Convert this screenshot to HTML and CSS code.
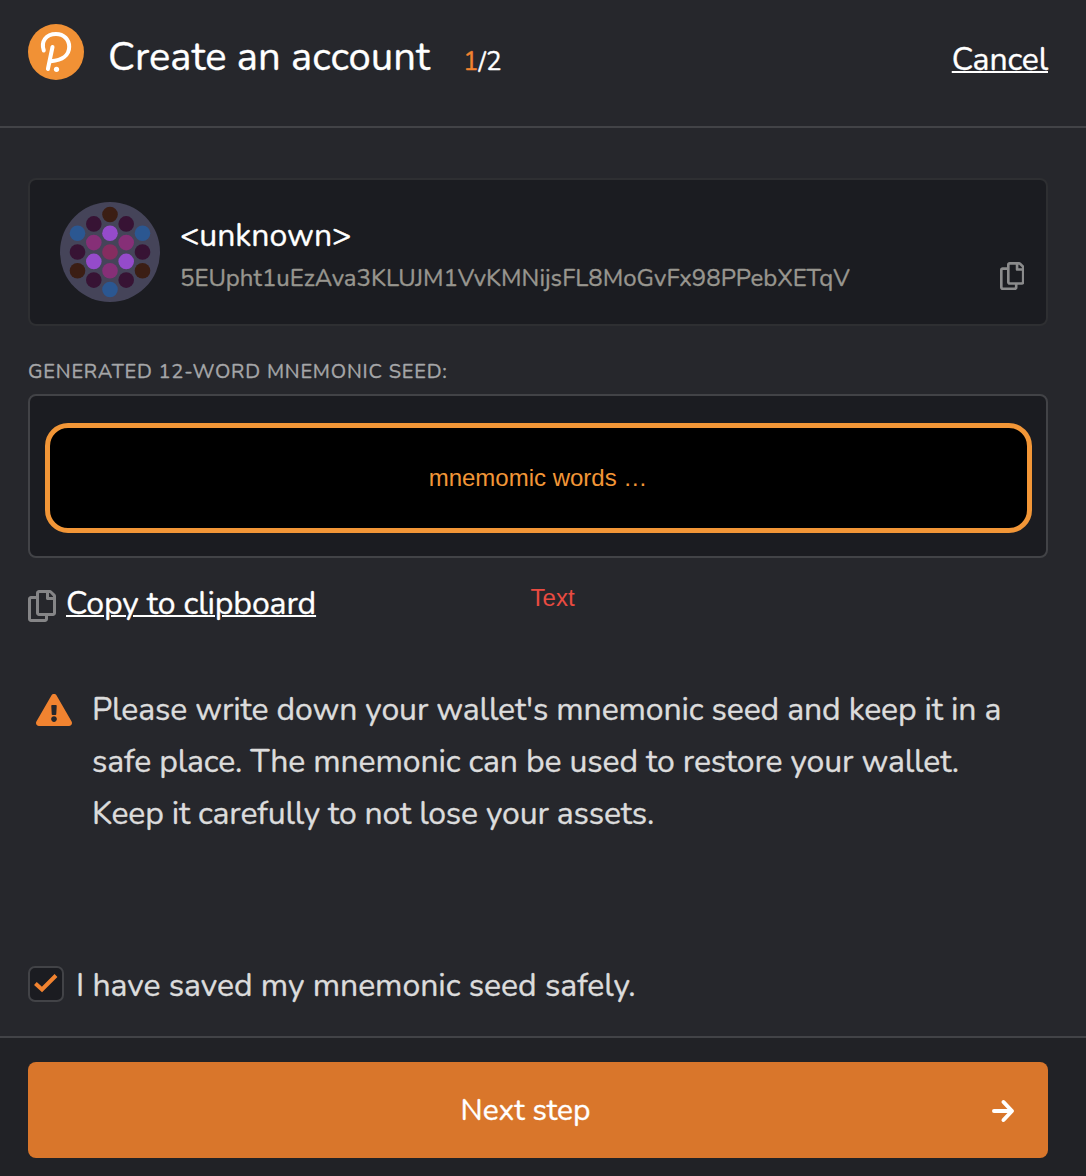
FILE: index.html
```html
<!DOCTYPE html>
<html lang="en">
<head>
<meta charset="utf-8">
<title>Create an account</title>
<link rel="stylesheet" href="styles.css">
</head>
<body>
<header class="header">
  <svg class="logo" viewBox="0 0 56 56"><circle cx="28" cy="28" r="28" fill="#f19135"/><g fill="none" stroke="#fff" stroke-width="4" stroke-linecap="round" stroke-linejoin="round"><path d="M15.8 26.5C12.6 17.5 18 10 28 10C36 10 41.2 15.8 41.2 22.8C41.2 31 34.5 36.3 23 37.3M24.5 23L19.9 45"/></g><circle cx="28.5" cy="45.3" r="2.6" fill="#fff"/></svg>
  <h1 class="title">Create an account</h1>
  <div class="step"><span class="step-current">1</span>/2</div>
  <a class="cancel">Cancel</a>
</header>
<main class="content">
  <section class="account">
    <svg class="avatar" viewBox="-50 -50 100 100">
      <circle r="50" fill="#454459"/>
      <g fill="#3b1e14"><circle cy="-37.5" r="7.8"/><circle cx="-32.5" cy="18.7" r="7.8"/><circle cx="32.5" cy="18.7" r="7.8"/></g>
      <g fill="#371334"><circle cx="-16.2" cy="-28.1" r="7.8"/><circle cx="16.2" cy="-28.1" r="7.8"/><circle cx="-32.5" r="7.8"/><circle cx="32.5" r="7.8"/><circle cx="-16.2" cy="28.1" r="7.8"/><circle cx="16.2" cy="28.1" r="7.8"/></g>
      <g fill="#2b5791"><circle cx="-32.5" cy="-18.7" r="7.8"/><circle cx="32.5" cy="-18.7" r="7.8"/><circle cy="37.5" r="7.8"/></g>
      <g fill="#954bcb"><circle cy="-18.7" r="7.8"/><circle cx="-16.2" cy="9.4" r="7.8"/><circle cx="16.2" cy="9.4" r="7.8"/></g>
      <g fill="#862f77"><circle cx="-16.2" cy="-9.4" r="7.8"/><circle cx="16.2" cy="-9.4" r="7.8"/><circle cy="18.7" r="7.8"/></g>
      <circle r="7.8" fill="#852d60"/>
    </svg>
    <div class="identity">
      <div class="name">&lt;unknown&gt;</div>
      <div class="address">5EUpht1uEzAva3KLUJM1VvKMNijsFL8MoGvFx98PPebXETqV</div>
    </div>
    <svg class="copy-address" viewBox="0 0 448 512"><path d="M433.941 65.941l-51.882-51.882A48 48 0 0 0 348.118 0H176c-26.51 0-48 21.49-48 48v48H48c-26.51 0-48 21.49-48 48v320c0 26.51 21.49 48 48 48h224c26.51 0 48-21.49 48-48v-48h80c26.51 0 48-21.49 48-48V99.882a48 48 0 0 0-14.059-33.941zM266 464H54a6 6 0 0 1-6-6V150a6 6 0 0 1 6-6h74v224c0 26.51 21.49 48 48 48h96v42a6 6 0 0 1-6 6zm128-96H182a6 6 0 0 1-6-6V54a6 6 0 0 1 6-6h106v88c0 13.255 10.745 24 24 24h88v202a6 6 0 0 1-6 6zm6-256h-64V48h9.632c1.591 0 3.117.632 4.243 1.757l48.368 48.368a6 6 0 0 1 1.757 4.243V112z"/></svg>
  </section>
  <div class="label">Generated 12-word mnemonic seed:</div>
  <section class="seed"><div class="seed-words">mnemomic words …</div></section>
  <div class="copy-row">
    <svg class="copy-icon" viewBox="0 0 448 512"><path d="M433.941 65.941l-51.882-51.882A48 48 0 0 0 348.118 0H176c-26.51 0-48 21.49-48 48v48H48c-26.51 0-48 21.49-48 48v320c0 26.51 21.49 48 48 48h224c26.51 0 48-21.49 48-48v-48h80c26.51 0 48-21.49 48-48V99.882a48 48 0 0 0-14.059-33.941zM266 464H54a6 6 0 0 1-6-6V150a6 6 0 0 1 6-6h74v224c0 26.51 21.49 48 48 48h96v42a6 6 0 0 1-6 6zm128-96H182a6 6 0 0 1-6-6V54a6 6 0 0 1 6-6h106v88c0 13.255 10.745 24 24 24h88v202a6 6 0 0 1-6 6zm6-256h-64V48h9.632c1.591 0 3.117.632 4.243 1.757l48.368 48.368a6 6 0 0 1 1.757 4.243V112z"/></svg>
    <a class="copy-link">Copy to clipboard</a>
    <span class="note">Text</span>
  </div>
  <section class="warning">
    <svg class="warning-icon" viewBox="0 0 576 512"><path d="M569.517 440.013C587.975 472.007 564.806 512 527.94 512H48.054c-36.937 0-59.999-40.055-41.577-71.987L246.423 23.985c18.467-32.009 64.72-31.951 83.154 0l239.94 416.028zM288 354c-25.405 0-46 20.595-46 46s20.595 46 46 46 46-20.595 46-46-20.595-46-46-46zm-43.673-165.346l7.418 136c.347 6.364 5.609 11.346 11.982 11.346h48.546c6.373 0 11.635-4.982 11.982-11.346l7.418-136c.375-6.874-5.098-12.654-11.982-12.654h-63.383c-6.884 0-12.356 5.78-11.981 12.654z"/></svg>
    <p class="warning-text">Please write down your wallet's mnemonic seed and keep it in a<br>safe place. The mnemonic can be used to restore your wallet.<br><span class="last-line">Keep it carefully to not lose your assets.</span></p>
  </section>
  <label class="confirm">
    <span class="checkbox"><svg class="check" viewBox="0 0 24 20"><path d="M1.4 10.5L8 16.5L22 2.5" fill="none" stroke="#f18330" stroke-width="4"/></svg></span>
    <span class="confirm-text">I have saved my mnemonic seed safely.</span>
  </label>
</main>
<footer class="footer">
  <button class="next"><span></span><span class="next-text">Next step</span><svg class="arrow" viewBox="0 0 24 24"><path d="M3 12H20M12.5 3L21 12L12.5 21" fill="none" stroke="#fff" stroke-width="4" stroke-linecap="round" stroke-linejoin="round"/></svg></button>
</footer>
</body>
</html>
```
FILE: styles.css
```css
* { box-sizing: border-box; }
body {
  margin: 0;
  height: 1176px;
  display: flex;
  flex-direction: column;
  overflow: hidden;
  background: #26272c;
  color: #fff;
  font-family: Nunito, Lato, "Noto Sans", sans-serif;
  white-space: nowrap;
  -webkit-text-stroke: 0.35px;
}
svg { display: block; flex: none; }
.header {
  height: 128px;
  padding: 24px 38px 0 28px;
  display: flex;
  align-items: flex-start;
  border-bottom: 2px solid #424347;
}
.logo { width: 56px; height: 56px; }
.title {
  margin: 5px 0 0 24px;
  width: 355px;
  font-size: 40px;
  line-height: 56px;
  font-weight: 400;
}
.step { margin-top: 20px; font-size: 26px; line-height: 36px; }
.step-current { color: #f18330; }
.cancel {
  margin: 14px 0 0 auto;
  font-size: 32px;
  line-height: 44px;
  letter-spacing: -0.15px;
  text-decoration: underline;
  text-decoration-thickness: 2px;
}
.content { flex: 1; padding: 50px 38px 0 28px; }
.account {
  height: 148px;
  padding: 22px 21.6px 0 30px;
  display: flex;
  border: 2px solid #2e2f32;
  border-radius: 8px;
  background: #1b1c21;
}
.avatar { width: 100px; height: 100px; }
.identity { flex: 1; padding-left: 20px; }
.name { margin-top: 13px; font-size: 32px; line-height: 42px; }
.address { margin-top: 3px; font-size: 24px; line-height: 36px; color: #98968f; }
.copy-address { margin-top: 60px; width: 24.5px; height: 28px; fill: #8b8b8c; }
.label {
  height: 68px;
  padding-top: 32px;
  font-size: 20px;
  line-height: 28px;
  letter-spacing: 0.8px;
  text-transform: uppercase;
  color: #a5a6a8;
}
.seed {
  height: 164px;
  padding: 27px 14px 0 15px;
  border: 2px solid #424347;
  border-radius: 8px;
  background: #1b1c21;
}
.seed-words {
  height: 110px;
  padding-right: 1px;
  display: grid;
  place-items: center;
  border: 5px solid #f29637;
  border-radius: 23px;
  background: #000;
  color: #f29637;
  font: 24px "Liberation Sans", sans-serif;
  -webkit-text-stroke: 0;
}
.copy-row { height: 136px; display: flex; padding-top: 22px; }
.copy-icon { width: 28px; height: 32px; margin-top: 10px; fill: #858587; }
.copy-link {
  width: 464.6px;
  margin: 1px 0 0 10px;
  font-size: 32px;
  line-height: 46px;
  letter-spacing: -0.12px;
  text-decoration: underline;
  text-decoration-thickness: 2px;
}
.note {
  margin-top: 4px;
  color: #e94b41;
  font: 24px/28px "Liberation Sans", sans-serif;
  -webkit-text-stroke: 0;
}
.warning { height: 272px; display: flex; padding-left: 8px; }
.warning-icon { width: 36px; height: 32px; fill: #f18330; }
.warning-text {
  margin: -10px 0 0 20px;
  font-size: 32px;
  line-height: 52px;
  letter-spacing: -0.14px;
  color: #dcdcdc;
}
.last-line { letter-spacing: -0.18px; }
.confirm { display: flex; color: #dcdcdc; }
.checkbox {
  width: 36px;
  height: 36px;
  padding: 5px 4px;
  border: 2px solid #424347;
  border-radius: 7px;
  background: #1b1c21;
}
.check { width: 24px; height: 20px; }
.confirm-text { margin: -2px 0 0 12px; font-size: 32px; line-height: 44px; letter-spacing: -0.04px; }
.footer {
  height: 140px;
  padding: 24px 38px 0 28px;
  border-top: 2px solid #424347;
  background: #212226;
}
.next {
  width: 100%;
  height: 96px;
  padding: 2px 33px 0 8px;
  display: grid;
  grid-template-columns: 1fr auto 1fr;
  align-items: center;
  border: 0;
  border-radius: 8px;
  background: #d9762b;
  color: #fff;
  font: inherit;
  -webkit-text-stroke: inherit;
}
.next-text { font-size: 30px; line-height: 42px; }
.arrow { width: 24px; height: 24px; justify-self: end; }
```
